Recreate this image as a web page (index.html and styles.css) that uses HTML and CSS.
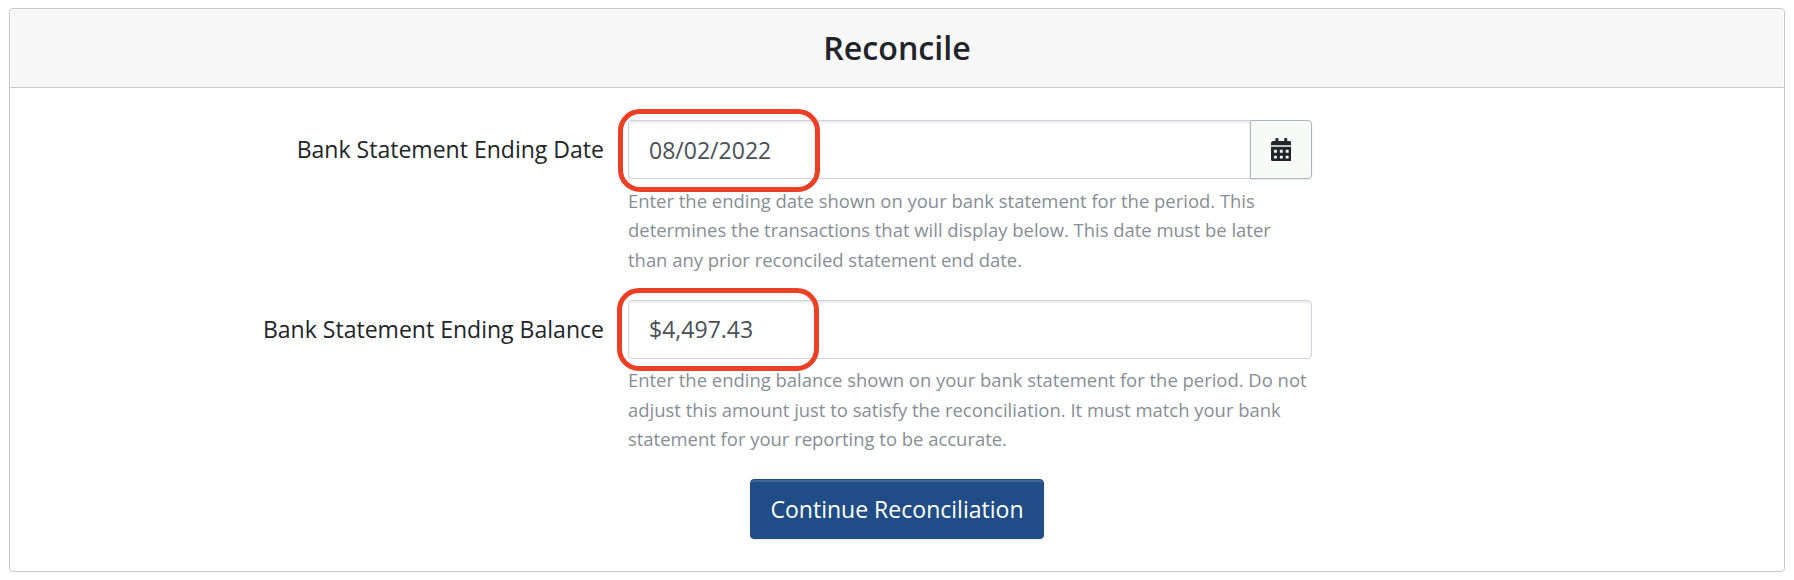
FILE: index.html
```
<!DOCTYPE html>
<html lang="en">

<head>
    <meta charset="UTF-8">
    <title>Reconcile</title>
    <link rel="stylesheet" href="styles.css">
</head>

<body>
    <div class="card">
        <div class="card-header">
            <h2>Reconcile</h2>
        </div>
        <form class="card-body">
            <div class="form-row">
                <label for="endDate">Bank Statement Ending Date</label>
                <div class="field">
                    <div class="input-group">
                        <input type="text" id="endDate" class="with-button" value="08/02/2022">
                        <button type="button" class="calendar">
                            <svg width="20.6" height="23.5" viewBox="0 0 448 512">
                                <path fill="#212529" d="M0 464c0 26.500 21.500 48 48 48h352c26.500 0 48-21.500 48-48V192H0v272zm320-196c0-6.600 5.400-12 12-12h40c6.600 0 12 5.400 12 12v40c0 6.600-5.400 12-12 12h-40c-6.600 0-12-5.400-12-12v-40zm0 128c0-6.600 5.400-12 12-12h40c6.600 0 12 5.400 12 12v40c0 6.600-5.400 12-12 12h-40c-6.600 0-12-5.400-12-12v-40zM192 268c0-6.600 5.400-12 12-12h40c6.600 0 12 5.400 12 12v40c0 6.600-5.400 12-12 12h-40c-6.600 0-12-5.400-12-12v-40zm0 128c0-6.600 5.400-12 12-12h40c6.600 0 12 5.400 12 12v40c0 6.600-5.400 12-12 12h-40c-6.600 0-12-5.400-12-12v-40zM64 268c0-6.600 5.400-12 12-12h40c6.600 0 12 5.400 12 12v40c0 6.600-5.400 12-12 12H76c-6.600 0-12-5.400-12-12v-40zm0 128c0-6.600 5.400-12 12-12h40c6.600 0 12 5.400 12 12v40c0 6.600-5.400 12-12 12H76c-6.600 0-12-5.400-12-12v-40zM400 64h-48V16c0-8.800-7.200-16-16-16h-32c-8.800 0-16 7.200-16 16v48H160V16c0-8.800-7.200-16-16-16h-32c-8.800 0-16 7.200-16 16v48H48C21.500 64 0 85.500 0 112v48h448v-48c0-26.500-21.500-48-48-48z"/>
                            </svg>
                        </button>
                    </div>
                    <span class="highlight date-highlight"></span>
                    <p class="help">Enter the ending date shown on your bank statement for the period. This determines the transactions that will display below. This date must be later than any prior reconciled statement end date.</p>
                </div>
            </div>

            <div class="form-row">
                <label for="endBalance">Bank Statement Ending Balance</label>
                <div class="field">
                    <div class="input-group">
                        <input type="text" id="endBalance" value="$4,497.43">
                    </div>
                    <span class="highlight balance-highlight"></span>
                    <p class="help">Enter the ending balance shown on your bank statement for the period. Do not adjust this amount just to satisfy the reconciliation. It must match your bank statement for your reporting to be accurate.</p>
                </div>
            </div>

            <div class="buttons">
                <button type="button" class="continue">Continue Reconciliation</button>
            </div>
        </form>
    </div>
</body>

</html>
```

FILE: styles.css
```
* {
    box-sizing: border-box;
}

body {
    margin: 0;
    padding: 8px 9px;
    background: white;
    color: #212529;
    font-family: "Open Sans", "Liberation Sans", sans-serif;
    font-size: 23.04px;
}

.card {
    height: 564px;
    border: 1px solid #c8c8c8;
    border-radius: 4px;
    background: white;
}

.card-header {
    height: 79px;
    padding: 1px 1px 0;
    border-bottom: 1px solid #c8c8c8;
    background: #f7f7f7;
    background-clip: content-box;
    text-align: center;
}

h2 {
    margin: 0;
    padding-bottom: 2px;
    font-size: 32.2px;
    font-weight: 600;
    line-height: 75px;
}

.card-body {
    padding-top: 32px;
}

.form-row {
    display: grid;
    grid-template-columns: 594px 684px;
    column-gap: 24px;
    height: 179.6px;
}

label {
    line-height: 59px;
    text-align: right;
}

.field {
    position: relative;
}

.input-group {
    display: flex;
    height: 59px;
}

input {
    flex: 1;
    min-width: 0;
    padding: 0 20px;
    border: 1px solid #ced4da;
    border-radius: 4px;
    background: white;
    box-shadow: inset 0 2px 2px rgba(0, 0, 0, 0.075);
    color: #495057;
    font: inherit;
}

.with-button {
    border-right: 0;
    border-radius: 4px 0 0 4px;
}

.calendar {
    display: flex;
    align-items: center;
    justify-content: center;
    width: 62px;
    padding: 0;
    border: 1px solid #adb5bd;
    border-radius: 0 4px 4px 0;
    background: #f8faf8;
    box-shadow: 0 1px 2px rgba(0, 0, 0, 0.1);
}

.help {
    margin: 6.8px 0 0;
    color: #868e96;
    font-size: 18.44px;
    line-height: 29.5px;
}

/* red marks over the values */
.highlight {
    position: absolute;
    width: 202px;
    height: 83px;
    border: 5px solid #eb4025;
    border-radius: 22px;
}

.date-highlight {
    top: -11px;
    left: -10px;
}

.balance-highlight {
    top: -12px;
    left: -11px;
}

.buttons {
    display: flex;
    justify-content: center;
}

.continue {
    width: 294px;
    height: 60px;
    padding: 0;
    border: 1px solid #204d86;
    border-radius: 4px;
    background: #204d86;
    box-shadow: inset 0 2px 0 rgba(255, 255, 255, 0.15), 0 1px 2px rgba(0, 0, 0, 0.1);
    color: white;
    font: inherit;
}
```
